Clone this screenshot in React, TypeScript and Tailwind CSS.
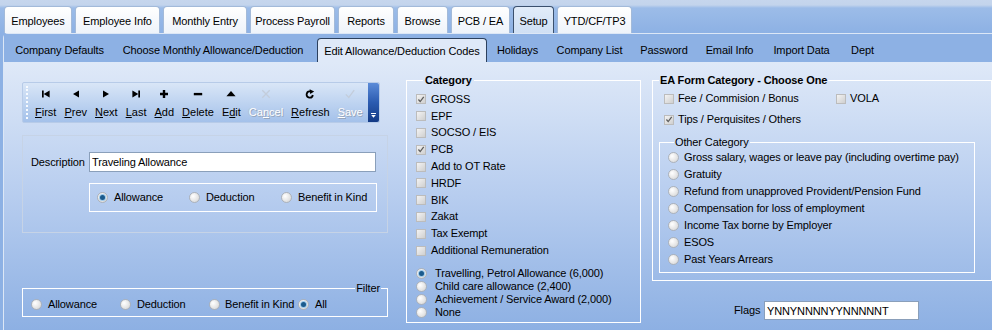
import React from "react";

const mainTabs = [
  { label: "Employees", width: "w-[68px]" },
  { label: "Employee Info", width: "w-[85px]" },
  { label: "Monthly Entry", width: "w-[84px]" },
  { label: "Process Payroll", width: "w-[85px]" },
  { label: "Reports", width: "w-[56px]" },
  { label: "Browse", width: "w-[51px]" },
  { label: "PCB / EA", width: "w-[59px]" },
  { label: "Setup", width: "w-[41px]", active: true },
  { label: "YTD/CF/TP3", width: "w-[75px]" },
];

const subTabs = [
  { label: "Company Defaults", width: "w-[105px]" },
  { label: "Choose Monthly Allowance/Deduction", width: "w-[202px]" },
  { label: "Edit Allowance/Deduction Codes", width: "w-[170px] ml-[3px]", active: true },
  { label: "Holidays", width: "w-[61px]" },
  { label: "Company List", width: "w-[83px]" },
  { label: "Password", width: "w-[66px]" },
  { label: "Email Info", width: "w-[65px]" },
  { label: "Import Data", width: "w-[79px]" },
  { label: "Dept", width: "w-[43px]" },
];

const categories = [
  { label: "GROSS", checked: true },
  { label: "EPF" },
  { label: "SOCSO / EIS" },
  { label: "PCB", checked: true },
  { label: "Add to OT Rate" },
  { label: "HRDF" },
  { label: "BIK" },
  { label: "Zakat" },
  { label: "Tax Exempt" },
  { label: "Additional Remuneration" },
];

const exemptions = [
  { label: "Travelling, Petrol Allowance (6,000)", checked: true },
  { label: "Child care allowance (2,400)" },
  { label: "Achievement / Service Award (2,000)" },
  { label: "None" },
];

const otherCategories = [
  "Gross salary, wages or leave pay (including overtime pay)",
  "Gratuity",
  "Refund from unapproved Provident/Pension Fund",
  "Compensation for loss of employment",
  "Income Tax borne by Employer",
  "ESOS",
  "Past Years Arrears",
];

const Radio = ({ checked }: { checked?: boolean }) => (
  <span className="flex h-[11px] w-[11px] shrink-0 items-center justify-center rounded-full border border-[#acb2ba] bg-[radial-gradient(circle_at_35%_35%,#ffffff,#d2d2d2)]">
    {checked && (
      <span className="h-[5px] w-[5px] rounded-full bg-[#1b5b8d] shadow-[0_0_0_1px_#9cc8ea]" />
    )}
  </span>
);

const Checkbox = ({ checked }: { checked?: boolean }) => (
  <span className="flex h-[10px] w-[10px] shrink-0 items-center justify-center border border-[#bcbcbc] bg-[linear-gradient(135deg,#f3f3f3,#cfcfcf)]">
    {checked && (
      <svg viewBox="0 0 10 10" className="h-[9px] w-[9px]">
        <path d="M1.8 5 L4 7.6 L8.4 1.8" fill="none" stroke="#5c5c5c" strokeWidth="1.6" />
      </svg>
    )}
  </span>
);

const ToolIcon = ({ name }: { name: string }) => {
  const dim = "#c3cddb";
  switch (name) {
    case "first":
      return (
        <svg viewBox="0 0 10 10" className="h-[10px] w-[10px]">
          <rect x="1" y="1.5" width="1.7" height="7" fill="#000" />
          <path d="M2.7 5 L8.6 1.5 V8.5 Z" fill="#000" />
        </svg>
      );
    case "prev":
      return (
        <svg viewBox="0 0 10 10" className="h-[10px] w-[10px]">
          <path d="M2 5 L8 1.5 V8.5 Z" fill="#000" />
        </svg>
      );
    case "next":
      return (
        <svg viewBox="0 0 10 10" className="h-[10px] w-[10px]">
          <path d="M8 5 L2 1.5 V8.5 Z" fill="#000" />
        </svg>
      );
    case "last":
      return (
        <svg viewBox="0 0 10 10" className="h-[10px] w-[10px]">
          <path d="M7.3 5 L1.4 1.5 V8.5 Z" fill="#000" />
          <rect x="7.3" y="1.5" width="1.7" height="7" fill="#000" />
        </svg>
      );
    case "add":
      return (
        <svg viewBox="0 0 10 10" className="h-[10px] w-[10px]">
          <path d="M3.8 1 h2.4 v8 h-2.4 z M1 3.8 h8 v2.4 h-8 z" fill="#000" />
        </svg>
      );
    case "delete":
      return (
        <svg viewBox="0 0 10 10" className="h-[10px] w-[10px]">
          <path d="M0.8 3.9 h8.4 v2.4 h-8.4 z" fill="#000" />
        </svg>
      );
    case "edit":
      return (
        <svg viewBox="0 0 10 10" className="h-[10px] w-[10px]">
          <path d="M5 2 L9.6 7.2 H0.4 Z" fill="#000" />
        </svg>
      );
    case "cancel":
      return (
        <svg viewBox="0 0 10 10" className="h-[10px] w-[10px]">
          <path d="M1.3 1.3 L8.7 8.7 M8.7 1.3 L1.3 8.7" stroke={dim} strokeWidth="1.3" fill="none" />
        </svg>
      );
    case "refresh":
      return (
        <svg viewBox="0 0 10 10" className="h-[10px] w-[10px]">
          <path d="M7.8 6 A3.1 3.1 0 1 1 5.2 2.4" stroke="#000" strokeWidth="1.8" fill="none" />
          <path d="M4.6 0.2 L9.2 2.4 L5.2 5 Z" fill="#000" />
        </svg>
      );
    default:
      return (
        <svg viewBox="0 0 10 10" className="h-[10px] w-[10px]">
          <path d="M0.8 5.4 L3.8 8.4 L9.2 1.2" stroke={dim} strokeWidth="1.3" fill="none" />
        </svg>
      );
  }
};

const toolButtons = [
  { icon: "first", before: "", key: "F", after: "irst" },
  { icon: "prev", before: "", key: "P", after: "rev" },
  { icon: "next", before: "", key: "N", after: "ext" },
  { icon: "last", before: "", key: "L", after: "ast" },
  { icon: "add", before: "", key: "A", after: "dd" },
  { icon: "delete", before: "", key: "D", after: "elete" },
  { icon: "edit", before: "E", key: "d", after: "it" },
  { icon: "cancel", before: "Ca", key: "n", after: "cel", disabled: true },
  { icon: "refresh", before: "", key: "R", after: "efresh" },
  { icon: "save", before: "", key: "S", after: "ave", disabled: true },
];

const Toolbar = () => (
  <div className="flex h-[41px] w-[358px] items-stretch rounded-[2px] border border-[#b7cbe8] bg-[linear-gradient(to_bottom,#d9e6f7,#bcd2f0_55%,#a4c1ea)] tracking-normal">
    <div className="my-[3px] ml-[3px] w-[2px] border-l-2 border-dotted border-[#f7fafe]" />
    <div className="ml-[3px] flex">
      {toolButtons.map((b) => (
        <button
          key={b.icon}
          type="button"
          className="flex flex-col items-center px-[4px] pt-[6px]"
        >
          <ToolIcon name={b.icon} />
          <span
            className={
              b.disabled
                ? "mt-[7px] leading-[13px] text-white [text-shadow:1px_1px_0_#97a6bd,-1px_0_0_#b3c2d8]"
                : "mt-[7px] leading-[13px] text-black"
            }
          >
            {b.before}
            <u className="underline-offset-[1px]">{b.key}</u>
            {b.after}
          </span>
        </button>
      ))}
    </div>
    <div className="ml-auto flex w-[11px] flex-col items-center justify-end rounded-r-[2px] bg-[linear-gradient(to_bottom,#5b8bd8,#2b5bb0_50%,#143a85)] pb-[4px]">
      <span className="mb-[1px] h-px w-[5px] bg-white" />
      <svg viewBox="0 0 6 4" className="h-[3px] w-[5px]">
        <path d="M0 0 H6 L3 3.5 Z" fill="#fff" />
      </svg>
    </div>
  </div>
);

export default function App() {
  return (
    <div className="h-[330px] w-[992px] overflow-hidden bg-[#8db1e4] font-['Liberation_Sans',Arial,sans-serif] text-[11px] leading-[13px] tracking-[-0.12px] text-black">
      {/* main tabs */}
      <div className="flex h-[33px] items-end gap-[3px] bg-[linear-gradient(to_bottom,#c6d6ed_0px,#c3d4ec_5px,#9cbce8_8px,#8db1e4_33px)] pl-[4px]">
        {mainTabs.map((t) => (
          <div
            key={t.label}
            className={
              t.active
                ? `${t.width} flex h-[27px] items-center justify-center rounded-t-[4px] border border-b-0 border-[#3b506d] bg-[linear-gradient(to_bottom,#e2ecf9,#cfdff4)] pt-[3px]`
                : `${t.width} flex h-[27px] items-center justify-center rounded-t-[4px] border border-b-0 border-[#a3bad9] bg-[linear-gradient(to_bottom,#ffffff,#eef3fa)] pt-[3px]`
            }
          >
            {t.label}
          </div>
        ))}
      </div>

      <div className="ml-[3px] flex h-[297px] flex-col rounded-tl-[5px] border-l border-t border-[#dce7f6]">
        {/* sub tabs */}
        <div className="flex h-[28px] items-end bg-[#8db1e4] pl-[3px]">
          {subTabs.map((t) => (
            <div
              key={t.label}
              className={
                t.active
                  ? `${t.width} flex h-[24px] items-center justify-center rounded-t-[4px] border border-b-0 border-[#2c405d] bg-[#dfe9f8] pt-[1px]`
                  : `${t.width} flex h-[24px] items-center justify-center pt-[1px]`
              }
            >
              {t.label}
            </div>
          ))}
        </div>

        {/* content */}
        <div className="flex h-[268px] bg-[linear-gradient(to_bottom,#dfe9f8,#b7cdef_50%,#8db0e3)]">
          {/* left column */}
          <div className="ml-[18px] flex w-[367px] flex-col pt-[20px]">
            <Toolbar />

            <div className="mt-[12px] h-[98px] border border-[#c6d3e6] pl-[8px] pt-[16px]">
              <div className="flex items-center">
                <span className="w-[58px]">Description</span>
                <input
                  readOnly
                  value="Traveling Allowance"
                  className="h-[20px] w-[287px] border border-[#8a9fba] bg-white px-[2px] text-[11px] outline-none"
                />
              </div>
              <div className="ml-[58px] mt-[11px] flex h-[29px] w-[288px] items-center border border-white pl-[7px]">
                <label className="flex w-[92px] items-center gap-[6px]">
                  <Radio checked />
                  Allowance
                </label>
                <label className="flex w-[92px] items-center gap-[6px]">
                  <Radio />
                  Deduction
                </label>
                <label className="flex items-center gap-[6px]">
                  <Radio />
                  Benefit in Kind
                </label>
              </div>
            </div>

            <fieldset className="mt-[49px] h-[35px] w-[366px] border border-white pl-[8px] pt-[3px]">
              <legend className="ml-auto mr-[6px] px-[1px] leading-[13px]">Filter</legend>
              <div className="flex h-[13px] items-center">
                <label className="flex w-[89px] items-center gap-[6px]">
                  <Radio />
                  Allowance
                </label>
                <label className="flex w-[89px] items-center gap-[6px]">
                  <Radio />
                  Deduction
                </label>
                <label className="flex w-[89px] items-center gap-[5px]">
                  <Radio />
                  Benefit in Kind
                </label>
                <label className="flex items-center gap-[6px]">
                  <Radio checked />
                  All
                </label>
              </div>
            </fieldset>
          </div>

          {/* category */}
          <fieldset className="ml-[18px] mt-[12px] h-[249px] w-[238px] border border-white pl-[9px] pt-[4px]">
            <legend className="ml-[7px] px-[2px] font-bold leading-[13px]">Category</legend>
            {categories.map((c) => (
              <div key={c.label} className="flex h-[16.8px] items-center gap-[5px]">
                <Checkbox checked={c.checked} />
                <span>{c.label}</span>
              </div>
            ))}
            <div className="mt-[8px]">
              {exemptions.map((e) => (
                <div key={e.label} className="flex h-[12.9px] items-center gap-[8px]">
                  <Radio checked={e.checked} />
                  <span>{e.label}</span>
                </div>
              ))}
            </div>
          </fieldset>

          {/* EA form */}
          <div className="ml-[11px] flex flex-col">
            <fieldset className="mt-[12px] h-[207px] w-[340px] border border-white pt-[3px]">
              <legend className="ml-[6px] px-[1px] font-bold leading-[13px]">
                EA Form Category - Choose One
              </legend>
              <div className="flex h-[17px] items-center pl-[11px]">
                <label className="flex w-[172px] items-center gap-[4px]">
                  <Checkbox />
                  Fee / Commision / Bonus
                </label>
                <label className="flex items-center gap-[4px]">
                  <Checkbox />
                  VOLA
                </label>
              </div>
              <div className="mt-[4px] flex h-[17px] items-center pl-[11px]">
                <label className="flex items-center gap-[4px]">
                  <Checkbox checked />
                  Tips / Perquisites / Others
                </label>
              </div>
              <fieldset className="ml-[6px] mt-[8px] h-[137px] w-[316px] border border-white pl-[8px]">
                <legend className="ml-[6px] px-[1px] leading-[13px]">Other Category</legend>
                {otherCategories.map((o) => (
                  <div key={o} className="flex h-[17px] items-center gap-[5px]">
                    <Radio />
                    <span>{o}</span>
                  </div>
                ))}
              </fieldset>
            </fieldset>

            <div className="mt-[20px] flex items-center pl-[82px]">
              <span className="w-[30px]">Flags</span>
              <input
                readOnly
                value="YNNYNNNNYYNNNNNT"
                className="h-[19px] w-[155px] border border-[#8a9fba] bg-white px-[2px] text-[11px] outline-none"
              />
            </div>
          </div>
        </div>
      </div>
    </div>
  );
}
